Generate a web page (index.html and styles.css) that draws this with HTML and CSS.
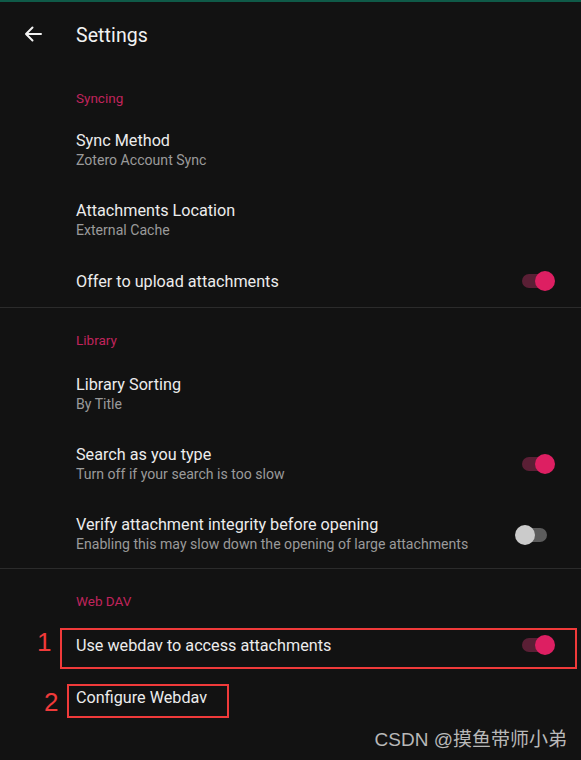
FILE: index.html
```html
<!DOCTYPE html>
<html>
<head>
<meta charset="utf-8">
<link rel="stylesheet" href="styles.css">
</head>
<body>
<div class="screen">
  <header class="appbar">
    <svg class="back" width="24" height="24" viewBox="0 0 24 24"><path d="M20 12H5M11.5 5.5L5 12l6.5 6.5" fill="none" stroke="#f2f2f2" stroke-width="2" stroke-linecap="round" stroke-linejoin="round"/></svg>
    <h1 class="title">Settings</h1>
  </header>

  <section class="section first">
    <div class="section-head">Syncing</div>
    <div class="row two"><div class="texts"><div class="r-title">Sync Method</div><div class="r-sub">Zotero Account Sync</div></div></div>
    <div class="row two"><div class="texts"><div class="r-title">Attachments Location</div><div class="r-sub">External Cache</div></div></div>
    <div class="row one"><div class="texts"><div class="r-title">Offer to upload attachments</div></div><div class="switch on"><span class="track"></span><span class="thumb"></span></div></div>
  </section>

  <section class="section divided">
    <div class="section-head">Library</div>
    <div class="row two"><div class="texts"><div class="r-title">Library Sorting</div><div class="r-sub">By Title</div></div></div>
    <div class="row two"><div class="texts"><div class="r-title">Search as you type</div><div class="r-sub">Turn off if your search is too slow</div></div><div class="switch on"><span class="track"></span><span class="thumb"></span></div></div>
    <div class="row two last"><div class="texts"><div class="r-title">Verify attachment integrity before opening</div><div class="r-sub">Enabling this may slow down the opening of large attachments</div></div><div class="switch off"><span class="track"></span><span class="thumb"></span></div></div>
  </section>

  <section class="section divided">
    <div class="section-head">Web DAV</div>
    <div class="row one"><div class="texts"><div class="r-title">Use webdav to access attachments</div></div><div class="switch on"><span class="track"></span><span class="thumb"></span></div>
      <span class="mark box1"></span><span class="num num1">1</span>
    </div>
    <div class="row one tall"><div class="texts"><div class="r-title">Configure Webdav</div></div>
      <span class="mark box2"></span><span class="num num2">2</span>
    </div>
  </section>

  <div class="watermark">CSDN @摸鱼带师小弟</div>
</div>
</body>
</html>
```

FILE: styles.css
```css
html, body {
  margin: 0;
  padding: 0;
  background: #121212;
}
body {
  font-family: Roboto, "Noto Sans", sans-serif;
  color: #ececec;
}
.screen {
  width: 581px;
  height: 760px;
  overflow: hidden;
  background: #121212;
  border-top: 2px solid #0f5a48;
  box-sizing: border-box;
  position: relative;
}
.appbar {
  height: 66px;
  display: flex;
  align-items: center;
  padding-left: 21px;
  box-sizing: border-box;
}
.back {
  width: 24px;
  height: 24px;
  flex: none;
  margin-top: -2px;
}
.title {
  margin: 0 0 0 31px;
  font-size: 19.5px;
  font-weight: 400;
  color: #f2f2f2;
  letter-spacing: 0.1px;
}
.section.divided {
  border-top: 1px solid #2b2b2b;
}
.section-head {
  height: 51px;
  box-sizing: border-box;
  padding: 24px 0 0 76px;
  font-size: 13.5px;
  line-height: 16px;
  color: #c0245c;
}
.section.first .section-head {
  height: 47px;
  padding-top: 22px;
}
.row {
  display: flex;
  align-items: center;
  padding: 0 26px 0 76px;
  box-sizing: border-box;
  position: relative;
}
.row.two { height: 70px; }
.row.two.last { height: 69px; padding-top: 2px; }
.row.one { height: 52px; }
.section.divided .row.one { height: 50px; }
.section.divided .row.one.tall { height: 54px; }
.texts { flex: 1; min-width: 0; }
.r-title {
  font-size: 16.2px;
  line-height: 19px;
  color: #ececec;
}
.r-sub {
  font-size: 14.1px;
  line-height: 19px;
  margin-top: 1px;
  color: #9a9a9a;
}
.switch {
  position: relative;
  width: 40px;
  height: 20px;
  flex: none;
}
.switch .track {
  position: absolute;
  left: 7px;
  top: 3px;
  width: 25px;
  height: 14px;
  border-radius: 7px;
}
.switch .thumb {
  position: absolute;
  top: 0;
  width: 20px;
  height: 20px;
  border-radius: 50%;
}
.switch.on .track { background: #5a1f35; }
.switch.on .thumb { right: 0; background: #dd1f62; }
.switch.off .track { background: #5c5c5c; }
.switch.off .thumb { left: 0; background: #cbcbcb; }

.mark {
  position: absolute;
  border: 2px solid #f03a3a;
  box-sizing: border-box;
}
.box1 { left: 60px; top: 8px; width: 517px; height: 41px; }
.box2 { left: 67px; top: 14px; width: 162px; height: 34px; }
.num {
  position: absolute;
  color: #f03a3a;
  font-family: "Liberation Sans", sans-serif;
  font-size: 26px;
  line-height: 26px;
}
.num1 { left: 37px; top: 9px; }
.num2 { left: 44px; top: 19px; }
.watermark {
  position: absolute;
  right: 14px;
  bottom: 9px;
  font-family: "Liberation Sans", "Noto Sans CJK SC", sans-serif;
  font-size: 19px;
  color: #b8b8b8;
}
```
